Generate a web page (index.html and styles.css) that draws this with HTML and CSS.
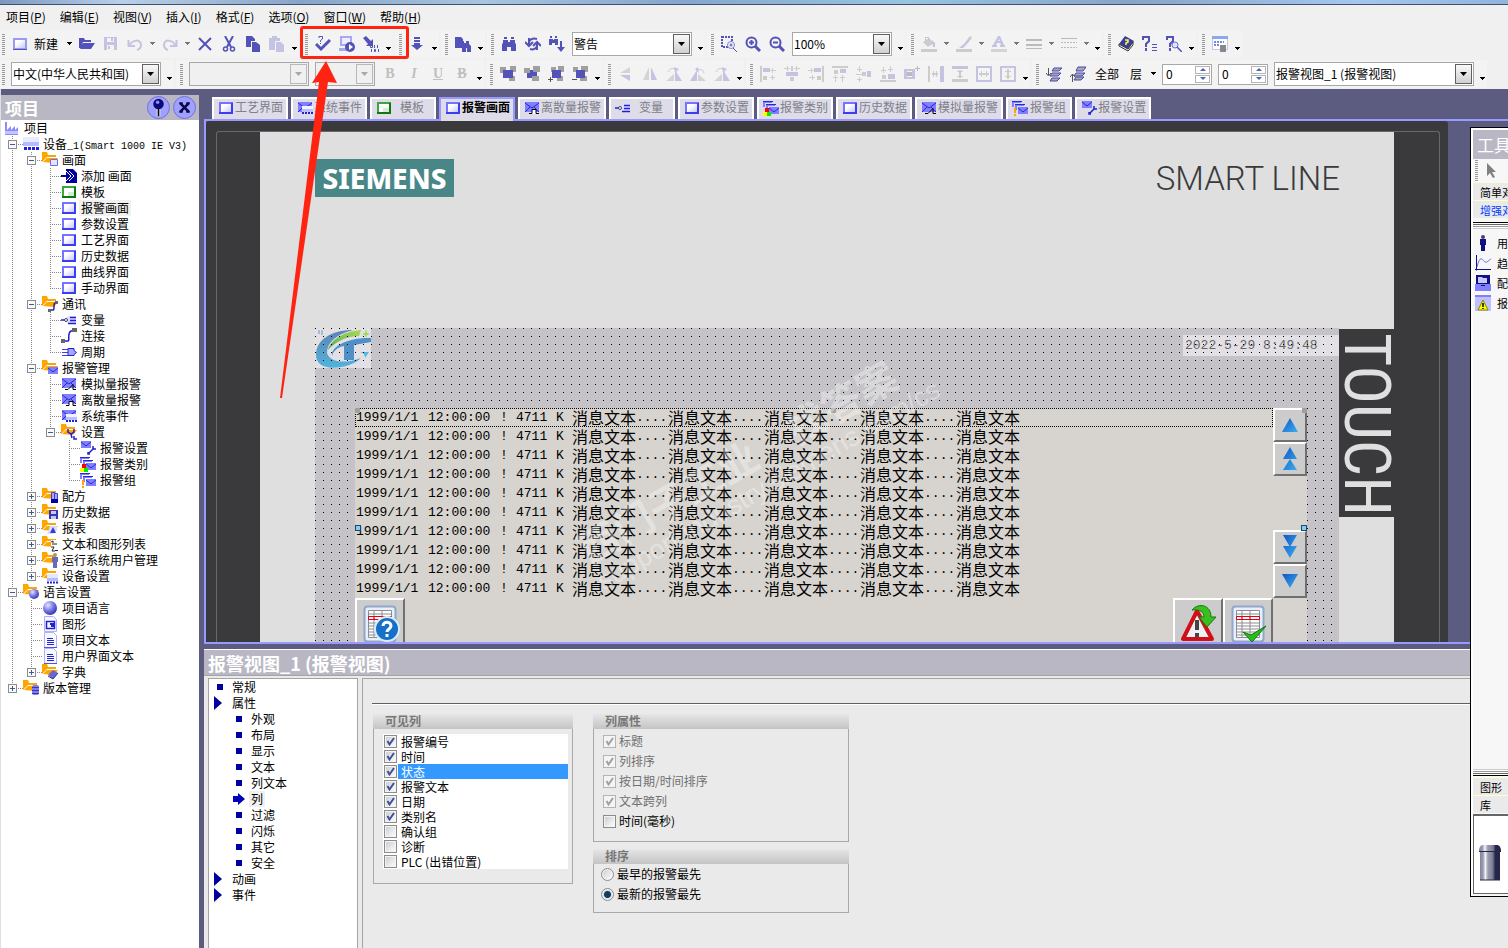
FILE: index.html
```
<!DOCTYPE html>
<html lang="zh-CN">

<head>
    <meta charset="utf-8">
    <title>报警画面</title>
    <link rel="stylesheet" href="styles.css">
</head>

<body>
    <!-- 图标 -->
    <svg class="sprite" aria-hidden="true">
        <defs>
            <linearGradient id="g-screen" x1="1" y1="1" x2="0" y2="0"><stop offset="0" stop-color="#c4c8ff"/><stop offset=".7" stop-color="#fff"/></linearGradient>
            <linearGradient id="g-arrow" x1="0" y1="0" x2="1" y2="1"><stop offset="0" stop-color="#1454c4"/><stop offset="1" stop-color="#38b0f0"/></linearGradient>
            <radialGradient id="g-ball" cx=".35" cy=".3" r=".8"><stop offset="0" stop-color="#e4e4ff"/><stop offset=".5" stop-color="#7878e8"/><stop offset="1" stop-color="#2828a0"/></radialGradient>
            <linearGradient id="g-logo" x1="0" y1="0" x2="0" y2="1"><stop offset="0" stop-color="#5f84b4"/><stop offset="1" stop-color="#50b4dc"/></linearGradient>
            <linearGradient id="g-leaf" x1="0" y1="1" x2="1" y2="0"><stop offset="0" stop-color="#58a868"/><stop offset="1" stop-color="#a8dc50"/></linearGradient>
            <linearGradient id="g-tank"><stop offset="0" stop-color="#85859a"/><stop offset=".15" stop-color="#9a9ab0"/><stop offset=".27" stop-color="#f4f4fa"/><stop offset=".4" stop-color="#9a9ab0"/><stop offset=".6" stop-color="#85859a"/><stop offset=".7" stop-color="#55557a"/><stop offset=".75" stop-color="#26264a"/></linearGradient>
        </defs>
        <symbol id="i-screen" viewBox="0 0 16 16"><path fill="#7474ff" d="M1 2h14v12H1z"/><path fill="#3c3cf0" d="M1 12h14v2H1zM13 3h2v11h-2z"/><path fill="url(#g-screen)" d="M3 4h10v8H3z"/></symbol>
        <symbol id="i-new" viewBox="0 0 16 16"><path fill="#9a9af0" d="M1 2h14v12H1z"/><path fill="url(#g-screen)" d="M3 4h10v8H3z"/><path fill="#5252b8" d="M1 13h14v1H1z"/></symbol>
        <symbol id="i-green" viewBox="0 0 16 16"><path fill="#38a838" d="M1 2h14v12H1z"/><path fill="#107810" d="M1 12h14v2H1zM13 3h2v11h-2z"/><path fill="#fff" d="M3 4h10v8H3z"/><path fill="#d4ecd4" d="M7 8h6v4H7z"/></symbol>
        <symbol id="i-mail" viewBox="0 0 16 16"><path fill="#8080ff" d="M1 2h14v10H1z"/><path d="M1 3l7 5 7-5M1 12l5-5M15 12l-5-5" fill="none" stroke="#2828d8"/></symbol>
        <symbol id="i-analog" viewBox="0 0 16 16"><use href="#i-mail"/><path d="M4 13.500h3l5-5v5h3" fill="none" stroke="#000"/></symbol>
        <symbol id="i-discrete" viewBox="0 0 16 16"><use href="#i-mail"/><path fill="#fff" d="M8 10h4v4H8z"/><path d="M5 13.500h3v-4h4v4h3" fill="none" stroke="#000"/></symbol>
        <symbol id="i-event" viewBox="0 0 16 16"><use href="#i-mail"/><path fill="#f0f2ff" d="M5 6h11v6H5z"/><path fill="#b8c0ff" d="M5 9h11v3H5z"/><path d="M5 13h11" stroke="#2020e0" stroke-width="2" stroke-dasharray="2 1"/></symbol>
        <symbol id="i-mailset" viewBox="0 0 16 16"><path fill="#8080ff" d="M1 1h10v7H1z"/><path d="M1 2l5 4 5-4" fill="none" stroke="#2828d8"/><path d="M9 13l5-5M8 12v2h2M13 6v3h3" fill="none" stroke="#2020d0" stroke-width="1.500"/></symbol>
        <symbol id="i-mails" viewBox="0 0 16 16"><path fill="#8080ff" d="M0 1h9v2H2v4H0zM3 4h9v2H5v4H3zM6 7h10v7H6z"/><path d="M0 1.500h10M3 4.500h10M6 8l5 4 5-4" fill="none" stroke="#2828d8"/></symbol>
        <symbol id="i-class" viewBox="0 0 16 16"><use href="#i-mails"/><path fill="#f00" d="M2 8h4v4H2z"/><path fill="#ff0" d="M0 12h4v4H0z"/><path fill="#0e0" d="M4 12h4v4H4z"/></symbol>
        <symbol id="i-group" viewBox="0 0 16 16"><use href="#i-mails"/><path fill="#ffa500" d="M2 8h2v5H2zM2 14h2v2H2z"/></symbol>
        <symbol id="i-tag" viewBox="0 0 16 16"><path fill="#dcdcff" d="M3 8l4-4h8v8H7z"/><path d="M0 8h4M9 5.500h6M9 8.500h6M7 11.500h8" stroke="#2020d8" stroke-width="1.500"/><circle cx="5" cy="8" r="1.500" fill="#fff" stroke="#446"/></symbol>
        <symbol id="i-link" viewBox="0 0 16 16"><path d="M3 13h4c2 0-1-8 3-10h3" fill="none" stroke="#2020c8" stroke-width="1.500"/><path fill="#666" d="M0 11h4v4H0zM11 0h5v4h-5z"/></symbol>
        <symbol id="i-cycle" viewBox="0 0 16 16"><path d="M1 5.500h9M1 8.500h9M1 11.500h9" stroke="#3c3cf0"/><path fill="#a8a8f8" stroke="#2020d8" d="M7 4.500h6v2l2.500 2-2.500 2v1H7z"/></symbol>
        <symbol id="i-add" viewBox="0 0 16 16"><path fill="#00009c" d="M5 1h7l4 4v10H5z"/><path d="M5 3l5 5-5 5M8 3l5 5-5 5" fill="none" stroke="#fff"/><path d="M0 8h8" stroke="#00009c" stroke-width="2"/></symbol>
        <symbol id="i-factory" viewBox="0 0 16 16"><path fill="#8c8cf8" d="M1 2h2v8l4-4v4l4-4v4l3-3v8H1z"/><path fill="#c4c4ff" d="M1 11h13v3H1z"/></symbol>
        <symbol id="i-device" viewBox="0 0 16 16"><path fill="#e8ecff" d="M0 1h16v8H0z"/><path fill="#b4bcff" d="M0 6h16v4H0z"/><path d="M1 12.500h15" stroke="#2020d8" stroke-width="3" stroke-dasharray="3 1"/></symbol>
        <symbol id="i-folder" viewBox="0 0 16 16"><path fill="#ffa500" d="M0 0h5l1 3h8v2H5L0 10zM1 10l4-4h11l-4 5z"/></symbol>
        <symbol id="i-f-screen" viewBox="0 0 16 16"><use href="#i-folder"/><path fill="#e4e4ff" stroke="#6c6cf8" d="M8.500 7.500h7v6h-7z"/></symbol>
        <symbol id="i-f-link" viewBox="0 0 16 16"><use href="#i-folder"/><path d="M8 14h3c2 0 0-6 2-7h2" fill="none" stroke="#2020c8" stroke-width="1.500"/><path fill="#666" d="M6 13h3v3H6zM13 5h3v3h-3z"/></symbol>
        <symbol id="i-f-mail" viewBox="0 0 16 16"><use href="#i-folder"/><path fill="#8080ff" d="M6 7h10v7H6z"/><path d="M6 8l5 4 5-4" fill="none" stroke="#2828d8"/></symbol>
        <symbol id="i-f-set" viewBox="0 0 16 16"><use href="#i-folder"/><path d="M7 5v3l3 2 1 4M13 5v3l-3 2M13 12v3h3" fill="none" stroke="#2020d0" stroke-width="1.500"/></symbol>
        <symbol id="i-f-recipe" viewBox="0 0 16 16"><use href="#i-folder"/><path fill="#a0a8ff" stroke="#4040d0" d="M9.500 4.500h3v9h-3zM12.500 5.500h3v9h-3z"/><path fill="#0000a0" d="M9 11h7v4H9z"/></symbol>
        <symbol id="i-f-disk" viewBox="0 0 16 16"><use href="#i-folder"/><path fill="#3838b0" d="M7 6h9v9H7z"/><path fill="#c8c8ff" d="M9 7h5v3H9zM9 12h5v3H9z"/></symbol>
        <symbol id="i-f-report" viewBox="0 0 16 16"><use href="#i-folder"/><path fill="#d8dcff" d="M8 6h7v4l-4 4H5z"/><path fill="#3838e0" d="M11 7l3 6H8z"/></symbol>
        <symbol id="i-f-list" viewBox="0 0 16 16"><use href="#i-folder"/><path fill="#fff" d="M9 4h7v12H9z"/><path d="M9 6l2-1v4M15 8h-3M9 11h3l-2 4h3M13 14.500h3" fill="none" stroke="#223"/></symbol>
        <symbol id="i-f-user" viewBox="0 0 16 16"><use href="#i-folder"/><circle cx="13" cy="3" r="2" fill="#b89060"/><path fill="#6868c0" d="M10 5h6v5h-1v6h-4v-6h-1z"/></symbol>
        <symbol id="i-f-device" viewBox="0 0 16 16"><use href="#i-folder"/><path fill="#e4e8ff" d="M5 6h11v7H5z"/><path fill="#b4bcff" d="M5 10h11v3H5z"/><path d="M5 14.500h11" stroke="#2020d8" stroke-width="2" stroke-dasharray="2 1"/></symbol>
        <symbol id="i-f-ball" viewBox="0 0 16 16"><use href="#i-folder"/><circle cx="11" cy="10" r="5" fill="url(#g-ball)"/></symbol>
        <symbol id="i-f-book" viewBox="0 0 16 16"><use href="#i-folder"/><path fill="#6868d0" d="M6 11l5-5 5 3-5 6z"/><path d="M6 12l5 3 5-6" fill="none" stroke="#33337c"/></symbol>
        <symbol id="i-f-db" viewBox="0 0 16 16"><use href="#i-folder"/><rect x="9" y="5" width="7" height="10" rx="2" fill="#7c7cf0"/><path d="M9 7.500h7M9 10.500h7M9 13.500h7" stroke="#3838b0"/></symbol>
        <symbol id="i-ball" viewBox="0 0 16 16"><circle cx="8" cy="8" r="7" fill="url(#g-ball)"/></symbol>
        <symbol id="i-doc" viewBox="0 0 16 16"><path fill="#f8f8ff" stroke="#b0b0f0" d="M2.500.5h9l3 3v12h-12z"/><path d="M5 6.500h6M5 8.500h7M5 10.500h7M5 12.500h7" stroke="#2020d8"/><path d="M2 15.500h13" stroke="#5050f0"/></symbol>
        <symbol id="i-pic" viewBox="0 0 16 16"><path fill="#f8f8ff" stroke="#b0b0f0" d="M2.500.5h9l3 3v12h-12z"/><path d="M4.500 5.500h8v7h-8z" fill="none" stroke="#2020d8" stroke-width="1.500"/><path fill="#2020d8" d="M8 7h4v4H9V9H8z"/></symbol>

        <symbol id="t-open" viewBox="0 0 16 16"><path d="M0 2h5l1 2h6v2H4l-2 6-2 0zM4 7h12l-4 6H1z"/></symbol>
        <symbol id="t-save" viewBox="0 0 16 16"><path d="M1 1h13v13H1zM4 2v4h7V2zM4 9v5h7V9z" fill-rule="evenodd"/><path d="M5 10h2v3H5zM8 2h2v3H8z"/></symbol>
        <symbol id="t-undo" viewBox="0 0 16 16"><path d="M1.500 4v6H8M2 10C6 3 14 3 14 9c0 2-1 4-4 5" fill="none" stroke="currentColor" stroke-width="2"/></symbol>
        <symbol id="t-redo" viewBox="0 0 16 16"><path d="M14.500 4v6H8M14 10C10 3 2 3 2 9c0 2 1 4 4 5" fill="none" stroke="currentColor" stroke-width="2"/></symbol>
        <symbol id="t-del" viewBox="0 0 16 16"><path d="M2 2l12 12M14 2L2 14" fill="none" stroke="currentColor" stroke-width="2"/></symbol>
        <symbol id="t-cut" viewBox="0 0 16 16"><path d="M4 0l6 11M12 0L6 11" fill="none" stroke="currentColor" stroke-width="2"/><circle cx="4.500" cy="13" r="2" fill="none" stroke="currentColor" stroke-width="1.500"/><circle cx="11.500" cy="13" r="2" fill="none" stroke="currentColor" stroke-width="1.500"/></symbol>
        <symbol id="t-copy" viewBox="0 0 16 16"><path d="M1 0h6l3 3v2H6v6H1zM7 6h4l4 3v7H7z"/></symbol>
        <symbol id="t-paste" viewBox="0 0 16 16"><path d="M0 2h3V0h5v2h3v3H6v9H0zM7 6h5l3 3v7H7z"/></symbol>
        <symbol id="t-check" viewBox="0 0 16 16"><path d="M1 8l5 5 9-9" fill="none" stroke="currentColor" stroke-width="3"/><path d="M4 2V.5h3.500V3L5.500 4.500V6M5.500 7v1" fill="none" stroke="currentColor"/></symbol>
        <symbol id="t-run" viewBox="0 0 16 16"><path fill="#a8a8f0" d="M1 0h12v10H1zM0 12h9v3H0z"/><path fill="#eef" d="M3 2h8v6H3z"/><circle cx="11" cy="11" r="5"/><path fill="#fff" d="M10 8l4 3-4 3z"/></symbol>
        <symbol id="t-transfer" viewBox="0 0 16 16"><path d="M0 2l3-2 5 5 2-2v7H3l2-2z"/><path fill="none" stroke="currentColor" d="M7.500 9.500h2v2h-2zM11.500 9v3M14.500 9v3M8.500 13v3M11.500 13.500h1v2h-1zM15.500 13v3"/></symbol>
        <symbol id="t-down" viewBox="0 0 16 16"><path d="M5 1h6v2H5zM5 4h6v2H5zM5 7h6v2h3l-6 5-6-5h3z"/></symbol>
        <symbol id="t-cross" viewBox="0 0 16 16"><path d="M0 1h6l2 2v9H0zM6 5h3v2h2V5h3v3l2 2v6h-4v-4h-1v4H7V9z"/></symbol>
        <symbol id="t-find" viewBox="0 0 16 16"><path d="M3 1h3v2H3zM10 1h3v2h-3zM2 4h5v2h2V4h5v3l1 1v7h-5v-4H6v4H1V8l1-1z"/></symbol>
        <symbol id="t-replace" viewBox="0 0 16 16"><path d="M4 2v7M0 6l4 4 4-4M4 7c0-4 4-5 8-4M12 14V7M8 10l4-4 4 4M12 9c0 4-4 5-7 4" fill="none" stroke="currentColor" stroke-width="2"/></symbol>
        <symbol id="t-findnext" viewBox="0 0 16 16"><path d="M1 0h2v2H1zM6 0h2v2H6zM0 3h4v1h1V3h4v6H6V7H3v2H0zM11 5h2v6h3l-4 5-4-5h3z"/></symbol>
        <symbol id="t-zoomarea" viewBox="0 0 16 16"><path d="M1 1h10v10H1z" fill="none" stroke="currentColor" stroke-width="2" stroke-dasharray="2 1"/><circle cx="10" cy="9" r="3.500" fill="#f3f3f3" stroke="#8080d8"/><path d="M12 12l4 4M8.500 9h3M10 7.500v3" stroke="currentColor"/></symbol>
        <symbol id="t-zoomin" viewBox="0 0 16 16"><circle cx="6.500" cy="6.500" r="5" fill="none" stroke="currentColor" stroke-width="2"/><path d="M10 10l5 5" stroke="currentColor" stroke-width="3"/><path d="M4 6.500h5M6.500 4v5" stroke="currentColor" stroke-width="2"/></symbol>
        <symbol id="t-zoomout" viewBox="0 0 16 16"><circle cx="6.500" cy="6.500" r="5" fill="none" stroke="currentColor" stroke-width="2"/><path d="M10 10l5 5" stroke="currentColor" stroke-width="3"/><path d="M4 6.500h5" stroke="currentColor" stroke-width="2"/></symbol>
        <symbol id="t-fill" viewBox="0 0 16 16"><path fill="#ccc" d="M2 6l6-4 5 5-6 4zM0 13h16v3H0z"/><path d="M4 5V1h4v3H7V2H5v3zM11 4l3 3v4h-2z"/></symbol>
        <symbol id="t-brush" viewBox="0 0 16 16"><path fill="#ccc" d="M0 13h16v3H0z"/><path d="M14 0l2 2-6 7-3 3H3l5-4z"/><path fill="#e8e4b0" d="M13 0h3v3z"/></symbol>
        <symbol id="t-color" viewBox="0 0 16 16"><path fill="#d4d4d4" d="M0 13h16v3H0z"/><path d="M7 0h2l4 9h1v2h-5V9h1l-1-2H6L5 9h1v2H1V9h1zM8 3L7 5h2z" fill-rule="evenodd"/></symbol>
        <symbol id="t-lines" viewBox="0 0 16 16"><path fill="#bbb" d="M0 3h16v2H0zM0 8h16v2H0zM0 12h16v1H0z"/></symbol>
        <symbol id="t-dashes" viewBox="0 0 16 16"><path d="M0 2.500h16" stroke="#bbb"/><path d="M0 6.500h16M0 11.500h16" stroke="#bbb" stroke-dasharray="2 1"/></symbol>
        <symbol id="t-book" viewBox="0 0 16 16"><path fill="#3c3c9c" d="M7 0l9 5-6 8-9-5z"/><path fill="#eee" stroke="#333" d="M1 8l9 5 5-7v3l-5 6-9-5z"/><path d="M7 4h3v2L8 7v2" fill="none" stroke="#ff4" stroke-width="1.500"/></symbol>
        <symbol id="t-help" viewBox="0 0 16 16"><path d="M1 4V1h6v4L4 8v3M4 12v3" fill="none" stroke="currentColor" stroke-width="2"/><path d="M10 8.500h5M10 11.500h5M10 14.500h5" stroke="currentColor"/></symbol>
        <symbol id="t-helpfind" viewBox="0 0 16 16"><path d="M1 4V1h6v4L4 8v3M4 12v3" fill="none" stroke="currentColor" stroke-width="2"/><circle cx="9" cy="9" r="3" fill="#e0e4ff" stroke="#7070d0"/><path d="M11 11l5 5" stroke="currentColor" stroke-width="1.500"/></symbol>
        <symbol id="t-window" viewBox="0 0 16 16"><path fill="#c0c8ec" d="M0 0h16v14H0z"/><path fill="#88a8f0" d="M0 0h16v3H0z"/><path fill="#fff" d="M1 3h14v10H1z"/><path d="M2 6h10M2 9h6" stroke="#8080e8" stroke-width="2" stroke-dasharray="2 1"/><path fill="#888" d="M8 9h6v7H8z"/></symbol>

        <symbol id="t-front" viewBox="0 0 16 16"><path fill="#a0a0a0" d="M0 1h6v6H0zM10 0h6v6h-6zM9 10h6v5H9z"/><path d="M3 4h10v8H3z"/></symbol>
        <symbol id="t-back" viewBox="0 0 16 16"><path d="M3 4h10v8H3z"/><path fill="#a0a0a0" d="M0 2h6v5H0zM9 0h7v6H9zM8 10h7v5H8z"/></symbol>
        <symbol id="t-forward" viewBox="0 0 16 16"><path fill="#a0a0a0" d="M3 1h5v5H3zM10 0h6v6h-6zM9 10h6v5H9z"/><path d="M4 4h9v8H4z"/><path fill="#555" d="M0 13h5v1H0zM2 11h1v5H2z"/></symbol>
        <symbol id="t-backward" viewBox="0 0 16 16"><path fill="#a0a0a0" d="M1 1h5v5H1zM9 0h7v6H9zM8 10h7v5H8z"/><path d="M4 4h9v8H4z"/><path fill="#555" d="M0 13h5v1H0z"/></symbol>
        <symbol id="t-flipv" viewBox="0 0 16 16"><path fill="#d4d4d4" d="M12 1v6H2z"/><path d="M2 9h10v6z"/></symbol>
        <symbol id="t-fliph" viewBox="0 0 16 16"><path fill="#d4d4d4" d="M7 1v13H1z"/><path d="M9 1v13h6z"/></symbol>
        <symbol id="t-rotl" viewBox="0 0 16 16"><path fill="#d4d4d4" d="M8 8v7H0z"/><path d="M9 4l7 11H9zM8 1l5 2-4 4z"/><path d="M2 6c2-4 5-4 7-3" fill="none" stroke="currentColor"/></symbol>
        <symbol id="t-rotr" viewBox="0 0 16 16"><path fill="#d4d4d4" d="M8 8v7h8z"/><path d="M7 4L0 15h7zM8 1L5 3l4 4z"/><path d="M14 7c-1-4-4-4-7-3" fill="none" stroke="currentColor"/></symbol>
        <symbol id="t-al" viewBox="0 0 16 16"><path fill="#ccc" d="M0 0h2v16H0zM3 10h4v4H3zM12 2h1v5h-1zM10 4h6v1h-6zM10 11h5v1h-5zM12 9h1v5h-1z"/><path d="M3 2h7v4H3z"/></symbol>
        <symbol id="t-ac" viewBox="0 0 16 16"><path fill="#ccc" d="M0 2h6v1H0zM10 2h6v1h-6zM7 0h2v5H7zM3 0h1v5H3zM12 0h1v5h-1zM6 11h4v4H6z"/><path d="M2 6h12v4H2z"/></symbol>
        <symbol id="t-ar" viewBox="0 0 16 16"><path fill="#ccc" d="M14 0h2v16h-2zM9 10h4v4H9zM3 2h1v5H3zM0 4h6v1H0zM1 11h6v1H1zM4 9h1v5H4z"/><path d="M6 2h7v4H6z"/></symbol>
        <symbol id="t-at" viewBox="0 0 16 16"><path fill="#ccc" d="M0 0h16v2H0zM2 4h4v4H2zM3 9h1v7H3zM10 9h1v7h-1zM1 11h5v1H1zM8 11h5v1H8z"/><path d="M8 3h6v4H8z"/></symbol>
        <symbol id="t-am" viewBox="0 0 16 16"><path fill="#ccc" d="M3 0h1v6H3zM1 3h5v1H1zM0 8h6v1H0zM6 6h4v4H6zM3 11h1v5H3zM1 13h5v1H1z"/><path d="M11 5h4v6h-4z"/></symbol>
        <symbol id="t-ab" viewBox="0 0 16 16"><path fill="#ccc" d="M0 14h16v2H0zM2 9h4v4H2zM3 1h1v6H3zM10 0h1v6h-1zM1 4h5v1H1zM8 3h5v1H8z"/><path d="M8 8h7v5H8z"/></symbol>
        <symbol id="t-center" viewBox="0 0 16 16"><path d="M0 3h11v10H0zM3 5v6h5V5z" fill-rule="evenodd"/><path fill="#bbb" d="M3 6h5v4H3zM11 2h5v1h-5zM13 0h1v5h-1z"/></symbol>
        <symbol id="t-sw" viewBox="0 0 16 16"><path fill="#ccc" d="M0 0h2v16H0zM4 7h6v2H4zM5 5h1v6H5zM8 5h1v6H8z"/><path d="M12 0h4v16h-4z"/></symbol>
        <symbol id="t-sh" viewBox="0 0 16 16"><path fill="#ccc" d="M0 13h16v3H0zM7 4h2v8H7zM5 5h6v1H5zM5 10h6v1H5z"/><path d="M0 0h16v3H0z"/></symbol>
        <symbol id="t-ew" viewBox="0 0 16 16"><path d="M0 0h16v16H0zM2 2v12h12V2z" fill-rule="evenodd"/><path fill="#ccc" d="M3 7h10v2H3zM5 5h1v6H5zM10 5h1v6h-1z"/></symbol>
        <symbol id="t-eh" viewBox="0 0 16 16"><path d="M0 0h16v16H0zM2 2v12h12V2z" fill-rule="evenodd"/><path fill="#ccc" d="M7 3h2v10H7zM5 5h6v1H5zM5 10h6v1H5z"/></symbol>
        <symbol id="t-layer1" viewBox="0 0 16 16"><path d="M6 5l2-3h8l-3 3zM4 10l2-3h9l-3 3zM4 15l2-3h8l-3 3z" fill="#a8a8b8" stroke="#4848a8"/><path d="M2.500 2v7M0 7l2.500 3L5 7" fill="none" stroke="#555"/></symbol>
        <symbol id="t-layer2" viewBox="0 0 16 16"><path d="M6 5l2-4h8l-3 4zM4 10l2-3h9l-3 3zM4 14l2-3h8l-3 3z" fill="#a8a8b8" stroke="#4848a8"/><path d="M2.500 16V8M0 11l2.500-3L5 11" fill="none" stroke="#555"/></symbol>
        <symbol id="t-drop" viewBox="0 0 7 4"><path d="M1 0h5v1H1zM2 1h3v1H2zM3 2h1v1H3z"/></symbol>
        <symbol id="t-drop2" viewBox="0 0 7 4"><path d="M0 0h7L3.500 4z"/></symbol>

        <symbol id="a-table" viewBox="0 0 40 44"><rect x="1.500" y="1.500" width="31" height="35" rx="3" fill="#e8eefa" stroke="#90a8c8" stroke-width="2"/><path d="M5.500 5.500h23v27h-23zM5 9h24M5 18h24M5 21h24M5 24h24M5 27h24M5 30h24M11 5v27M19 5v27" fill="#fff" stroke="#8c8c94"/><path d="M5.500 11.500h23v3h-23zM11 12v3M19 12v3" fill="none" stroke="#e00010"/></symbol>
    </svg>

    <div class="app">
        <div class="titlebar"></div>

        <nav class="menubar">
            <button>项目(<u>P</u>)</button>
            <button>编辑(<u>E</u>)</button>
            <button>视图(<u>V</u>)</button>
            <button>插入(<u>I</u>)</button>
            <button>格式(<u>F</u>)</button>
            <button>选项(<u>O</u>)</button>
            <button>窗口(<u>W</u>)</button>
            <button>帮助(<u>H</u>)</button>
        </nav>

        <div class="toolrow">
            <div class="toolbar first">
                <i class="grip"></i>
                <button class="tool" title="新建"><svg><use href="#i-new"/></svg></button>
                <button class="tool-text new">新建</button>
                <button class="drop"><svg><use href="#t-drop"/></svg></button>
                <button class="tool"><svg><use href="#t-open"/></svg></button>
                <button class="tool off"><svg><use href="#t-save"/></svg></button>
                <button class="tool off"><svg><use href="#t-undo"/></svg></button>
                <button class="drop dim"><svg><use href="#t-drop"/></svg></button>
                <button class="tool off"><svg><use href="#t-redo"/></svg></button>
                <button class="drop dim"><svg><use href="#t-drop"/></svg></button>
                <button class="tool"><svg><use href="#t-del"/></svg></button>
                <button class="tool"><svg><use href="#t-cut"/></svg></button>
                <button class="tool"><svg><use href="#t-copy"/></svg></button>
                <button class="tool off"><svg><use href="#t-paste"/></svg></button>
                <button class="more"><svg><use href="#t-drop"/></svg></button>
            </div>
            <div class="toolbar">
                <i class="grip"></i>
                <button class="tool"><svg><use href="#t-check"/></svg></button>
                <button class="tool"><svg><use href="#t-run"/></svg></button>
                <button class="tool"><svg><use href="#t-transfer"/></svg></button>
                <button class="more"><svg><use href="#t-drop"/></svg></button>
            </div>
            <div class="toolbar">
                <i class="grip"></i>
                <button class="tool"><svg><use href="#t-down"/></svg></button>
                <button class="more"><svg><use href="#t-drop"/></svg></button>
            </div>
            <div class="toolbar">
                <i class="grip"></i>
                <button class="tool"><svg><use href="#t-cross"/></svg></button>
                <button class="more"><svg><use href="#t-drop"/></svg></button>
            </div>
            <div class="toolbar">
                <i class="grip"></i>
                <button class="tool"><svg><use href="#t-find"/></svg></button>
                <button class="tool"><svg><use href="#t-replace"/></svg></button>
                <button class="tool"><svg><use href="#t-findnext"/></svg></button>
                <div class="combo w120"><select aria-label="查找"><option>警告</option></select><span><svg><use href="#t-drop2"/></svg></span></div>
                <button class="more"><svg><use href="#t-drop"/></svg></button>
            </div>
            <div class="toolbar">
                <i class="grip"></i>
                <button class="tool"><svg><use href="#t-zoomarea"/></svg></button>
                <button class="tool"><svg><use href="#t-zoomin"/></svg></button>
                <button class="tool"><svg><use href="#t-zoomout"/></svg></button>
                <div class="combo w100"><select aria-label="缩放"><option>100%</option></select><span><svg><use href="#t-drop2"/></svg></span></div>
                <button class="more"><svg><use href="#t-drop"/></svg></button>
            </div>
            <div class="toolbar">
                <i class="grip"></i>
                <button class="tool off"><svg><use href="#t-fill"/></svg></button>
                <button class="drop dim"><svg><use href="#t-drop"/></svg></button>
                <button class="tool off"><svg><use href="#t-brush"/></svg></button>
                <button class="drop dim"><svg><use href="#t-drop"/></svg></button>
                <button class="tool off"><svg><use href="#t-color"/></svg></button>
                <button class="drop dim"><svg><use href="#t-drop"/></svg></button>
                <button class="tool off"><svg><use href="#t-lines"/></svg></button>
                <button class="drop dim"><svg><use href="#t-drop"/></svg></button>
                <button class="tool off"><svg><use href="#t-dashes"/></svg></button>
                <button class="drop dim"><svg><use href="#t-drop"/></svg></button>
                <button class="more"><svg><use href="#t-drop"/></svg></button>
            </div>
            <div class="toolbar">
                <i class="grip"></i>
                <button class="tool"><svg><use href="#t-book"/></svg></button>
                <button class="tool"><svg><use href="#t-help"/></svg></button>
                <button class="tool"><svg><use href="#t-helpfind"/></svg></button>
                <button class="more"><svg><use href="#t-drop"/></svg></button>
            </div>
            <div class="toolbar">
                <i class="grip"></i>
                <button class="tool"><svg><use href="#t-window"/></svg></button>
                <button class="more"><svg><use href="#t-drop"/></svg></button>
            </div>
        </div>

        <div class="toolrow">
            <div class="toolbar first">
                <i class="grip"></i>
                <div class="combo w150"><select aria-label="语言"><option>中文(中华人民共和国)</option></select><span><svg><use href="#t-drop2"/></svg></span></div>
                <button class="more"><svg><use href="#t-drop"/></svg></button>
            </div>
            <div class="toolbar">
                <i class="grip"></i>
                <div class="combo w120 off"><select aria-label="字体" disabled></select><span><svg><use href="#t-drop2"/></svg></span></div>
                <div class="combo w60 off"><select aria-label="字号" disabled></select><span><svg><use href="#t-drop2"/></svg></span></div>
                <button class="tool letter"><b>B</b></button>
                <button class="tool letter"><i>I</i></button>
                <button class="tool letter"><u>U</u></button>
                <button class="tool letter"><s>B</s></button>
                <button class="more"><svg><use href="#t-drop"/></svg></button>
            </div>
            <div class="toolbar">
                <i class="grip"></i>
                <button class="tool"><svg><use href="#t-front"/></svg></button>
                <button class="tool"><svg><use href="#t-back"/></svg></button>
                <button class="tool"><svg><use href="#t-forward"/></svg></button>
                <button class="tool"><svg><use href="#t-backward"/></svg></button>
                <button class="more"><svg><use href="#t-drop"/></svg></button>
            </div>
            <div class="toolbar">
                <i class="grip"></i>
                <button class="tool off"><svg><use href="#t-flipv"/></svg></button>
                <button class="tool off"><svg><use href="#t-fliph"/></svg></button>
                <button class="tool off"><svg><use href="#t-rotl"/></svg></button>
                <button class="tool off"><svg><use href="#t-rotr"/></svg></button>
                <button class="tool off"><svg><use href="#t-rotl"/></svg></button>
                <button class="more"><svg><use href="#t-drop"/></svg></button>
            </div>
            <div class="toolbar">
                <i class="grip"></i>
                <button class="tool off"><svg><use href="#t-al"/></svg></button>
                <button class="tool off"><svg><use href="#t-ac"/></svg></button>
                <button class="tool off"><svg><use href="#t-ar"/></svg></button>
                <button class="tool off"><svg><use href="#t-at"/></svg></button>
                <button class="tool off"><svg><use href="#t-am"/></svg></button>
                <button class="tool off"><svg><use href="#t-ab"/></svg></button>
                <button class="tool off"><svg><use href="#t-center"/></svg></button>
                <button class="tool off"><svg><use href="#t-sw"/></svg></button>
                <button class="tool off"><svg><use href="#t-sh"/></svg></button>
                <button class="tool off"><svg><use href="#t-ew"/></svg></button>
                <button class="tool off"><svg><use href="#t-eh"/></svg></button>
                <button class="more"><svg><use href="#t-drop"/></svg></button>
            </div>
            <div class="toolbar">
                <i class="grip"></i>
                <button class="tool"><svg><use href="#t-layer1"/></svg></button>
                <button class="tool"><svg><use href="#t-layer2"/></svg></button>
                <button class="tool-text">全部</button>
                <button class="tool-text layer">层</button>
                <button class="drop"><svg><use href="#t-drop"/></svg></button>
                <div class="spin"><input type="text" value="0" aria-label="X"><div><button class="up"></button><button class="down"></button></div></div>
                <div class="spin"><input type="text" value="0" aria-label="Y"><div><button class="up"></button><button class="down"></button></div></div>
                <div class="combo w200"><select aria-label="对象"><option>报警视图_1 (报警视图)</option></select><span><svg><use href="#t-drop2"/></svg></span></div>
                <button class="more"><svg><use href="#t-drop"/></svg></button>
            </div>
        </div>

        <div class="workspace">
            <!-- 项目树 -->
            <aside class="project">
                <header class="panel-title">
                    <h2>项目</h2>
                    <button class="round" title="固定"><svg viewBox="0 0 24 24"><path d="M12 10v12" stroke="#fff" stroke-width="4"/><path d="M12 10v12" stroke="#000" stroke-width="2"/><circle cx="12" cy="8" r="6" fill="#0a0a78"/><circle cx="11" cy="6" r="2" fill="#8c8cf0"/></svg></button>
                    <button class="round" title="关闭"><svg viewBox="0 0 24 24"><path d="M7 7l10 10M17 7L7 17" stroke="#0a0a50" stroke-width="3"/><path d="M6 7h4M14 7h4M6 17h4M14 17h4" stroke="#0a0a50" stroke-width="2"/></svg></button>
                </header>
                <div class="tree">
                    <div class="row root"><svg><use href="#i-factory"/></svg><span>项目</span></div>
                    <ul>
                        <li>
                            <div class="row"><button class="exp open"></button><svg><use href="#i-device"/></svg><span>设备<span class="ascii">_1(Smart 1000 IE V3)</span></span></div>
                            <ul>
                                <li>
                                    <div class="row"><button class="exp open"></button><svg><use href="#i-f-screen"/></svg><span>画面</span></div>
                                    <ul>
                                        <li><div class="row"><svg><use href="#i-add"/></svg><span>添加 画面</span></div></li>
                                        <li><div class="row"><svg><use href="#i-green"/></svg><span>模板</span></div></li>
                                        <li><div class="row current"><svg><use href="#i-screen"/></svg><span>报警画面</span></div></li>
                                        <li><div class="row"><svg><use href="#i-screen"/></svg><span>参数设置</span></div></li>
                                        <li><div class="row"><svg><use href="#i-screen"/></svg><span>工艺界面</span></div></li>
                                        <li><div class="row"><svg><use href="#i-screen"/></svg><span>历史数据</span></div></li>
                                        <li><div class="row"><svg><use href="#i-screen"/></svg><span>曲线界面</span></div></li>
                                        <li><div class="row"><svg><use href="#i-screen"/></svg><span>手动界面</span></div></li>
                                    </ul>
                                </li>
                                <li>
                                    <div class="row"><button class="exp open"></button><svg><use href="#i-f-link"/></svg><span>通讯</span></div>
                                    <ul>
                                        <li><div class="row"><svg><use href="#i-tag"/></svg><span>变量</span></div></li>
                                        <li><div class="row"><svg><use href="#i-link"/></svg><span>连接</span></div></li>
                                        <li><div class="row"><svg><use href="#i-cycle"/></svg><span>周期</span></div></li>
                                    </ul>
                                </li>
                                <li>
                                    <div class="row"><button class="exp open"></button><svg><use href="#i-f-mail"/></svg><span>报警管理</span></div>
                                    <ul>
                                        <li><div class="row"><svg><use href="#i-analog"/></svg><span>模拟量报警</span></div></li>
                                        <li><div class="row"><svg><use href="#i-discrete"/></svg><span>离散量报警</span></div></li>
                                        <li><div class="row"><svg><use href="#i-event"/></svg><span>系统事件</span></div></li>
                                        <li>
                                            <div class="row"><button class="exp open"></button><svg><use href="#i-f-set"/></svg><span>设置</span></div>
                                            <ul>
                                                <li><div class="row"><svg><use href="#i-mailset"/></svg><span>报警设置</span></div></li>
                                                <li><div class="row"><svg><use href="#i-class"/></svg><span>报警类别</span></div></li>
                                                <li><div class="row"><svg><use href="#i-group"/></svg><span>报警组</span></div></li>
                                            </ul>
                                        </li>
                                    </ul>
                                </li>
                                <li><div class="row"><button class="exp"></button><svg><use href="#i-f-recipe"/></svg><span>配方</span></div></li>
                                <li><div class="row"><button class="exp"></button><svg><use href="#i-f-disk"/></svg><span>历史数据</span></div></li>
                                <li><div class="row"><button class="exp"></button><svg><use href="#i-f-report"/></svg><span>报表</span></div></li>
                                <li><div class="row"><button class="exp"></button><svg><use href="#i-f-list"/></svg><span>文本和图形列表</span></div></li>
                                <li><div class="row"><button class="exp"></button><svg><use href="#i-f-user"/></svg><span>运行系统用户管理</span></div></li>
                                <li><div class="row"><button class="exp"></button><svg><use href="#i-f-device"/></svg><span>设备设置</span></div></li>
                            </ul>
                        </li>
                        <li>
                            <div class="row"><button class="exp open"></button><svg><use href="#i-f-ball"/></svg><span>语言设置</span></div>
                            <ul>
                                <li><div class="row"><svg><use href="#i-ball"/></svg><span>项目语言</span></div></li>
                                <li><div class="row"><svg><use href="#i-pic"/></svg><span>图形</span></div></li>
                                <li><div class="row"><svg><use href="#i-doc"/></svg><span>项目文本</span></div></li>
                                <li><div class="row"><svg><use href="#i-doc"/></svg><span>用户界面文本</span></div></li>
                                <li><div class="row"><button class="exp"></button><svg><use href="#i-f-book"/></svg><span>字典</span></div></li>
                            </ul>
                        </li>
                        <li><div class="row"><button class="exp"></button><svg><use href="#i-f-db"/></svg><span>版本管理</span></div></li>
                    </ul>
                </div>
            </aside>

            <main class="main">
                <div class="tabs">
                    <button class="tab"><svg><use href="#i-screen"/></svg><span>工艺界面</span></button>
                    <button class="tab"><svg><use href="#i-event"/></svg><span>系统事件</span></button>
                    <button class="tab"><svg><use href="#i-green"/></svg><span>模板</span></button>
                    <button class="tab active"><svg><use href="#i-screen"/></svg><span>报警画面</span></button>
                    <button class="tab"><svg><use href="#i-discrete"/></svg><span>离散量报警</span></button>
                    <button class="tab"><svg><use href="#i-tag"/></svg><span>变量</span></button>
                    <button class="tab"><svg><use href="#i-screen"/></svg><span>参数设置</span></button>
                    <button class="tab"><svg><use href="#i-class"/></svg><span>报警类别</span></button>
                    <button class="tab"><svg><use href="#i-screen"/></svg><span>历史数据</span></button>
                    <button class="tab"><svg><use href="#i-analog"/></svg><span>模拟量报警</span></button>
                    <button class="tab"><svg><use href="#i-group"/></svg><span>报警组</span></button>
                    <button class="tab"><svg><use href="#i-mailset"/></svg><span>报警设置</span></button>
                </div>

                <section class="editor">
                    <div class="bezel">
                        <div class="bezel-line">
                            <div class="face">
                                <div class="brand">
                                    <div class="siemens">SIEMENS</div>
                                    <div class="smart">SMART LINE</div>
                                </div>
                                <div class="front">
                                    <div class="screen">
                                        <div class="screen-top">
                                            <svg class="logo" viewBox="0 0 56 40"><path d="M1 27C1 12 16 2 38 2 22 6 12 14 12 25c2 8 16 12 34 5-8 9-34 14-42 5-2-2-3-5-3-8z" fill="url(#g-logo)"/><path d="M13 22C16 10 32 3 46 2l-2 6C32 8 20 14 13 22z" fill="url(#g-leaf)"/><path d="M17 28c-2-10 18-19 39-18v4l-17 3v15H29V18c-6 1-11 5-12 10z" fill="#5090c8"/><path d="M45 24h9l-4 6c0-3-1-5-5-6z" fill="#58b8e0"/><path d="M51 1l1 4 3 1-3 1-1 3-1-3-3-1 3-1z" fill="#a0d850"/><path d="M4 2v4M7 2v5" stroke="#60a0c0"/></svg>
                                            <div class="clock">2022-5-29 8:49:48</div>
                                        </div>
                                        <div class="alarm">
                                            <table>
                                                <tr class="focus"><td>1999/1/1</td><td>12:00:00</td><td>!</td><td>4711</td><td>K</td><td>消息文本<i>....</i>消息文本<i>....</i>消息文本<i>....</i>消息文本<i>....</i>消息文本</td></tr>
                                                <tr><td>1999/1/1</td><td>12:00:00</td><td>!</td><td>4711</td><td>K</td><td>消息文本<i>....</i>消息文本<i>....</i>消息文本<i>....</i>消息文本<i>....</i>消息文本</td></tr>
                                                <tr><td>1999/1/1</td><td>12:00:00</td><td>!</td><td>4711</td><td>K</td><td>消息文本<i>....</i>消息文本<i>....</i>消息文本<i>....</i>消息文本<i>....</i>消息文本</td></tr>
                                                <tr><td>1999/1/1</td><td>12:00:00</td><td>!</td><td>4711</td><td>K</td><td>消息文本<i>....</i>消息文本<i>....</i>消息文本<i>....</i>消息文本<i>....</i>消息文本</td></tr>
                                                <tr><td>1999/1/1</td><td>12:00:00</td><td>!</td><td>4711</td><td>K</td><td>消息文本<i>....</i>消息文本<i>....</i>消息文本<i>....</i>消息文本<i>....</i>消息文本</td></tr>
                                                <tr><td>1999/1/1</td><td>12:00:00</td><td>!</td><td>4711</td><td>K</td><td>消息文本<i>....</i>消息文本<i>....</i>消息文本<i>....</i>消息文本<i>....</i>消息文本</td></tr>
                                                <tr><td>1999/1/1</td><td>12:00:00</td><td>!</td><td>4711</td><td>K</td><td>消息文本<i>....</i>消息文本<i>....</i>消息文本<i>....</i>消息文本<i>....</i>消息文本</td></tr>
                                                <tr><td>1999/1/1</td><td>12:00:00</td><td>!</td><td>4711</td><td>K</td><td>消息文本<i>....</i>消息文本<i>....</i>消息文本<i>....</i>消息文本<i>....</i>消息文本</td></tr>
                                                <tr><td>1999/1/1</td><td>12:00:00</td><td>!</td><td>4711</td><td>K</td><td>消息文本<i>....</i>消息文本<i>....</i>消息文本<i>....</i>消息文本<i>....</i>消息文本</td></tr>
                                                <tr><td>1999/1/1</td><td>12:00:00</td><td>!</td><td>4711</td><td>K</td><td>消息文本<i>....</i>消息文本<i>....</i>消息文本<i>....</i>消息文本<i>....</i>消息文本</td></tr>
                                            </table>
                                            <div class="scroll">
                                                <button class="key"><svg viewBox="0 0 16 28"><path fill="url(#g-arrow)" d="M8 7l8 14H0z"/></svg></button>
                                                <button class="key"><svg viewBox="0 0 16 28"><path fill="url(#g-arrow)" d="M8 2l7 12H1zM8 14l7 11H1z"/></svg></button>
                                                <button class="key push"><svg viewBox="0 0 16 28"><path fill="url(#g-arrow)" d="M8 14l7-12H1zM8 25l7-12H1z"/></svg></button>
                                                <button class="key"><svg viewBox="0 0 16 28"><path fill="url(#g-arrow)" d="M8 21l8-14H0z"/></svg></button>
                                            </div>
                                            <div class="alarm-keys">
                                                <button class="key big"><svg viewBox="-3 -4 40 44"><use href="#a-table" width="40" height="44"/><circle cx="24" cy="24" r="12" fill="#1470c8" stroke="#d8ecfc" stroke-width="2"/><path d="M20 21c0-5 8-5 8 0 0 3-4 3-4 6M24 29v3" fill="none" stroke="#fff" stroke-width="3"/></svg></button>
                                                <button class="key big push"><svg viewBox="-3 -4 40 44"><path d="M16 6L2 34h29z" fill="#f0f0f4" stroke="#d01018" stroke-width="4" stroke-linejoin="round"/><path d="M16 15v10M16 28v4" stroke="#444" stroke-width="4"/><path d="M11 5C18-3 30 0 30 12h5l-9 10-8-10h5c0-5-4-8-12-7z" fill="#38c020" stroke="#187808"/></svg></button>
                                                <button class="key big"><svg viewBox="-3 -4 40 44"><use href="#a-table" width="40" height="44"/><path d="M12 27l8 3 15-9-14 16z" fill="#28c018" stroke="#0c7808"/></svg></button>
                                            </div>
                                            <i class="handle h1"></i><i class="handle h2"></i><i class="handle h3"></i>
                                            <i class="handle blue h4"></i><i class="handle blue h5"></i>
                                        </div>
                                    </div>
                                    <div class="touch">TOUCH</div>
                                </div>
                            </div>
                        </div>
                    </div>
                    <div class="watermark">
                        <p class="cn">西门子工业&emsp;找答案</p>
                        <p>support.industry.siemens.com/cs</p>
                    </div>
                </section>

                <section class="props">
                    <header class="panel-title"><h2>报警视图_1 (报警视图)</h2></header>
                    <div class="props-body">
                        <ul class="props-nav">
                            <li><i class="sq"></i>常规</li>
                            <li><i class="tri"></i>属性</li>
                            <li class="sub"><i class="sq"></i>外观</li>
                            <li class="sub"><i class="sq"></i>布局</li>
                            <li class="sub"><i class="sq"></i>显示</li>
                            <li class="sub"><i class="sq"></i>文本</li>
                            <li class="sub"><i class="sq"></i>列文本</li>
                            <li class="sub current"><svg viewBox="0 0 12 12"><path d="M0 3h5V0l7 6-7 6V9H0z" fill="#0000b8"/></svg><span>列</span></li>
                            <li class="sub"><i class="sq"></i>过滤</li>
                            <li class="sub"><i class="sq"></i>闪烁</li>
                            <li class="sub"><i class="sq"></i>其它</li>
                            <li class="sub"><i class="sq"></i>安全</li>
                            <li><i class="tri"></i>动画</li>
                            <li><i class="tri"></i>事件</li>
                        </ul>
                        <div class="props-page">
                            <div class="rule"></div>
                            <div class="groups">
                                <div class="group columns">
                                    <h3>可见列</h3>
                                    <div class="list">
                                        <label><input type="checkbox" checked><span>报警编号</span></label>
                                        <label><input type="checkbox" checked><span>时间</span></label>
                                        <label class="sel"><input type="checkbox" checked><span>状态</span></label>
                                        <label><input type="checkbox" checked><span>报警文本</span></label>
                                        <label><input type="checkbox" checked><span>日期</span></label>
                                        <label><input type="checkbox" checked><span>类别名</span></label>
                                        <label><input type="checkbox"><span>确认组</span></label>
                                        <label><input type="checkbox"><span>诊断</span></label>
                                        <label><input type="checkbox"><span>PLC (出错位置)</span></label>
                                    </div>
                                </div>
                                <div class="group-col">
                                    <div class="group">
                                        <h3>列属性</h3>
                                        <div class="options">
                                            <label><input type="checkbox" checked disabled><span>标题</span></label>
                                            <label><input type="checkbox" checked disabled><span>列排序</span></label>
                                            <label><input type="checkbox" checked disabled><span>按日期/时间排序</span></label>
                                            <label><input type="checkbox" checked disabled><span>文本跨列</span></label>
                                            <label><input type="checkbox"><span>时间(毫秒)</span></label>
                                        </div>
                                    </div>
                                    <div class="group">
                                        <h3>排序</h3>
                                        <div class="options radios">
                                            <label><input type="radio" name="sort"><span>最早的报警最先</span></label>
                                            <label><input type="radio" name="sort" checked><span>最新的报警最先</span></label>
                                        </div>
                                    </div>
                                </div>
                            </div>
                        </div>
                    </div>
                </section>
            </main>
        </div>

        <!-- 浮动工具窗口 -->
        <aside class="toolbox">
            <h2>工具</h2>
            <div class="toolbox-bar"><i class="grip"></i><svg viewBox="0 0 12 16"><path d="M2 0l9 9H7l3 5-2 1-3-5-3 3z" fill="#808080"/></svg></div>
            <button class="cat">简单对</button>
            <button class="cat blue">增强对</button>
            <div class="seam"></div>
            <ul>
                <li><svg viewBox="0 0 16 16"><circle cx="8" cy="2" r="2" fill="#446"/><path fill="#101080" d="M5 4h6v6h-1v6H6v-6H5z"/></svg>用</li>
                <li><svg viewBox="0 0 16 16"><path d="M1.500 0v15.500M0 14.500h16" stroke="#101080"/><path d="M2 12C5 0 7 4 10 7c2 1 4-2 6-3" fill="none" stroke="#6868e8"/></svg>趋</li>
                <li><svg viewBox="0 0 16 16"><path fill="#101080" d="M1 0h14v10H1z"/><path fill="#c4c8ff" d="M3 2h4l1 1h4v5H3z"/><path fill="#8080ff" d="M0 9h16v7H0z"/><path d="M6 10.500h4" stroke="#101080"/></svg>配</li>
                <li><svg viewBox="0 0 16 16"><path fill="#c0c0ff" d="M0 0h16v16H0z"/><path fill="#8080ff" d="M0 0h16v2H0z"/><path d="M8 5l5 10H3z" fill="#ff0" stroke="#880"/><path d="M8 8v4M8 13v1" stroke="#000" stroke-width="1.500"/></svg>报</li>
            </ul>
            <div class="seam flip"></div>
            <button class="cat">图形</button>
            <button class="cat">库</button>
            <div class="lib"><svg viewBox="0 0 22 36"><path d="M1 6h20v29H1z" fill="url(#g-tank)"/><path d="M0 6c0-4 2-6 4-6h14c2 0 4 2 4 6z" fill="url(#g-tank)"/><path d="M0 6.500h22M1 35h20" stroke="#26264a"/></svg></div>
        </aside>

        <!-- 标注 -->
        <div class="mark-box"></div>
        <svg class="mark-arrow" viewBox="0 0 52 340"><path d="M46 0l11 22-9-1L2 337H0L39 21l-7 1z" fill="#ff2412"/></svg>
    </div>
</body>

</html>
```
FILE: styles.css
```
* {
    box-sizing: border-box;
}

body {
    margin: 0;
    font: 12px/16px "Noto Sans CJK SC", sans-serif;
    color: #000;
}

button {
    font: inherit;
    color: inherit;
    border: 0;
    padding: 0;
    margin: 0;
    background: none;
}

h2,
h3,
p,
ul {
    margin: 0;
    padding: 0;
    list-style: none;
}

svg {
    display: block;
    fill: currentColor;
    flex: none;
}

.sprite {
    position: absolute;
    width: 0;
    height: 0;
}

.app {
    position: relative;
    display: flex;
    flex-direction: column;
    height: 100vh;
    overflow: hidden;
    background: #f0f0f0;
}

.titlebar {
    height: 5px;
    flex: none;
    background: linear-gradient(90deg, #7c98c0, #b8d0e8 8%, #88a4c8 20%, #a8c4e0 32%, #86a6cc 45%, #98c4e0 60%, #88a4c8 75%, #a4c8ec 90%, #90b4dc);
    border-bottom: 1px solid #40506c;
}

.menubar {
    display: flex;
    gap: 14px;
    height: 24px;
    flex: none;
    align-items: center;
    padding: 0 6px;
}

/* 工具栏 */
.toolrow {
    display: flex;
    gap: 2px;
    height: 30px;
    flex: none;
    padding: 1px 0;
}

.toolbar {
    display: flex;
    align-items: center;
    height: 28px;
    background: #f3f3f3;
    flex: none;
}

.toolbar.first {
    margin-left: -2px;
}

.grip {
    width: 3px;
    height: 21px;
    margin: 0 3px 0 4px;
    flex: none;
    background: repeating-linear-gradient(#999 0 1px, transparent 1px 2px);
}

.tool {
    width: 24px;
    height: 24px;
    display: flex;
    align-items: center;
    justify-content: center;
    color: #5252b8;
}

.tool svg {
    width: 16px;
    height: 16px;
}

.tool.off {
    color: #c4c4e2;
}

.tool.letter {
    color: #c0c0c0;
    font: bold 14px "Liberation Serif", serif;
}

.tool-text {
    padding: 0 5px;
}

.tool-text.new {
    padding: 0 6px 0 2px;
}

.tool-text.layer {
    padding: 0 6px;
}

.drop {
    width: 11px;
    display: flex;
    justify-content: center;
}

.drop.dim {
    color: #777;
}

.drop svg,
.more svg,
.combo span svg {
    width: 7px;
    height: 4px;
}

.more {
    width: 10px;
    height: 18px;
    align-self: flex-end;
    display: flex;
    align-items: center;
    justify-content: center;
}

.combo {
    display: flex;
    height: 24px;
    margin: 0 3px;
    padding: 1px;
    border: 1px solid #a8a8a8;
    background: #fff;
    flex: none;
}

.combo select {
    appearance: none;
    flex: 1;
    min-width: 0;
    border: 0;
    padding: 0;
    background: transparent;
    font: inherit;
    color: #000;
}

.combo span {
    width: 17px;
    border: 1px solid #606060;
    background: linear-gradient(#f8f8f8, #d0d0d0);
    display: flex;
    align-items: center;
    justify-content: center;
    pointer-events: none;
}

.combo.off {
    background: #f0f0f0;
}

.combo.off span {
    border-color: #b8b8b8;
    background: #f0f0f0;
    color: #a8a8a8;
}

.w60 {
    width: 60px;
}

.w100 {
    width: 100px;
}

.w120 {
    width: 120px;
}

.w150 {
    width: 150px;
}

.w200 {
    width: 200px;
}

.spin {
    display: flex;
    width: 50px;
    height: 21px;
    margin: 0 3px;
    padding: 1px;
    border: 1px solid #a8a8a8;
    background: #fff;
}

.spin input {
    flex: 1;
    min-width: 0;
    border: 0;
    padding: 0 2px;
    font: inherit;
}

.spin div {
    display: flex;
    flex-direction: column;
    width: 15px;
    gap: 1px;
}

.spin button {
    flex: 1;
    border: 1px solid #b4b4b8;
    display: flex;
    align-items: center;
    justify-content: center;
}

.spin button::after {
    content: "";
    border: 3px solid transparent;
}

.spin .up::after {
    border-top: 0;
    border-bottom-color: #4a66b0;
}

.spin .down::after {
    border-bottom: 0;
    border-top-color: #4a66b0;
}

/* 工作区 */
.workspace {
    flex: 1;
    min-height: 0;
    display: flex;
    gap: 5px;
    background: #5c5b80;
}

.panel-title {
    display: flex;
    align-items: center;
    height: 25px;
    flex: none;
    background: #b8b7c3;
}

.panel-title h2 {
    flex: 1;
    padding-left: 4px;
    color: #fff;
    font-size: 18px;
    line-height: 24px;
}

.project {
    width: 199px;
    flex: none;
    display: flex;
    flex-direction: column;
    padding-top: 6px;
    border-left: 1px solid #e0e0e0;
}

.project h2 {
    font-size: 17px;
}

.round {
    width: 23px;
    height: 23px;
    margin-right: 3px;
    border: 1px solid #7070e0;
    border-radius: 50%;
    background: #a0a0ff;
}

.round svg {
    width: 21px;
    height: 21px;
}

.tree {
    flex: 1;
    background: #fff;
    padding-left: 2px;
    white-space: nowrap;
}

.row {
    display: flex;
    align-items: center;
    height: 16px;
    padding-left: 20px;
    background: repeating-linear-gradient(90deg, #888 0 1px, transparent 1px 2px) 9px 8px / 11px 1px no-repeat;
}

.row.root {
    padding-left: 1px;
    background: none;
}

.row svg {
    width: 16px;
    height: 16px;
    margin-right: 2px;
}

.row > span {
    padding: 0 2px;
}

.row.current > span {
    background: #f0f0f0;
}

.ascii {
    font: 10px "Liberation Mono", monospace;
}

.tree ul ul {
    padding-left: 19px;
}

.tree li {
    background: repeating-linear-gradient(#888 0 1px, transparent 1px 2px) 9px 0 / 1px 100% no-repeat;
}

.tree li:last-child {
    background-size: 1px 8px;
}

.exp {
    width: 9px;
    height: 9px;
    margin: 0 6px 0 -15px;
    border: 1px solid #8c8c8c;
    background: linear-gradient(#3c5c98, #3c5c98) center / 5px 1px no-repeat, linear-gradient(#3c5c98, #3c5c98) center / 1px 5px no-repeat, #fafafa;
}

.exp.open {
    background: linear-gradient(#3c5c98, #3c5c98) center / 5px 1px no-repeat, #fafafa;
}

.main {
    flex: 1;
    min-width: 0;
    display: flex;
    flex-direction: column;
}

.tabs {
    display: flex;
    gap: 3px;
    height: 30px;
    flex: none;
    align-items: flex-end;
    padding-left: 8px;
}

.tab {
    display: flex;
    align-items: flex-start;
    height: 22px;
    min-width: 66px;
    padding: 1px 3px 0 4px;
    border: 2px solid #fff;
    border-bottom: 0;
    background: #dddce8;
    color: #808088;
}

.tab svg {
    width: 16px;
    height: 16px;
}

.tab span {
    flex: 1;
    margin: -1px 0 0 1px;
    white-space: nowrap;
}

.tab.active {
    z-index: 1;
    height: 24px;
    margin-bottom: -2px;
    border-color: #9a99ff;
    color: #000;
    font-weight: bold;
}

/* 画面编辑器 */
.editor {
    position: relative;
    flex: 1;
    min-height: 0;
    overflow: hidden;
    border: 2px solid #9a99ff;
    border-right: 0;
}

.bezel {
    width: 1242px;
    height: 100%;
    padding: 10px 8px 0 10px;
    background: #3a3a3c;
    border-radius: 3px 3px 0 0;
}

.bezel-line {
    height: 100%;
    padding: 0 45px 0 43px;
    border: 1px solid #68686c;
    border-bottom: 0;
    border-radius: 3px 3px 0 0;
}

.face {
    height: 100%;
    padding-left: 55px;
    background: #dfdfdf;
}

.brand {
    display: flex;
    justify-content: space-between;
    align-items: flex-start;
    height: 196px;
    padding: 27px 54px 0 0;
}

.siemens {
    width: 139px;
    height: 38px;
    background: #488688;
    color: #fff;
    font: 800 28px/38px "Noto Sans", "Open Sans", sans-serif;
    text-align: center;
}

.smart {
    color: #3a3a3c;
    font: 300 33px/40px Roboto, sans-serif;
}

.front {
    display: flex;
    align-items: flex-start;
}

.screen {
    position: relative;
    flex: 1;
    height: 600px;
    padding-left: 40px;
    background: #c5c3c8;
}

/* 网格点覆盖在对象之上 */
.screen::before {
    content: "";
    position: absolute;
    inset: 0;
    z-index: 1;
    background: conic-gradient(at 1px 1px, transparent 75%, #000 0) 0 0 / 8px 8px;
}

.screen-top {
    display: flex;
    justify-content: space-between;
    align-items: flex-start;
    height: 80px;
    margin-left: -40px;
}

.logo {
    width: 56px;
    height: 40px;
    background: #e2e0e4;
}

.clock {
    width: 156px;
    height: 21px;
    margin-top: 7px;
    padding-left: 2px;
    background: #e2e0e4;
    color: #666;
    font: 13px/21px "Liberation Mono", monospace;
}

.alarm {
    position: relative;
    z-index: 2;
    display: grid;
    grid-template-columns: 1fr 34px;
    grid-template-rows: 190px 50px;
    width: 952px;
    height: 400px;
    background: #d7d4cf;
}

.alarm table {
    border-collapse: collapse;
    table-layout: fixed;
    width: 918px;
}

.alarm tr {
    height: 19px;
}

.alarm .focus {
    outline: 1px dotted #000;
    outline-offset: -1px;
}

.alarm td {
    width: 72px;
    height: 19px;
    padding: 0 0 0 1px;
    font: 13px/19px "Liberation Mono", monospace;
    white-space: nowrap;
}

.alarm td:nth-child(3),
.alarm td:nth-child(5) {
    width: 16px;
}

.alarm td:nth-child(4) {
    width: 40px;
}

.alarm td:last-child {
    width: auto;
    font: 16px/19px "Noto Sans CJK SC", sans-serif;
}

.alarm td i {
    display: inline-block;
    width: 32px;
    vertical-align: top;
    font: 13px/19px "Liberation Mono", monospace;
}

.scroll {
    display: flex;
    flex-direction: column;
}

.scroll .push {
    margin-top: auto;
}

.key {
    display: flex;
    align-items: center;
    justify-content: center;
    width: 34px;
    height: 34px;
    background: #ccc;
    border: 2px solid;
    border-color: #fff #707070 #707070 #fff;
}

.key svg {
    width: 16px;
    height: 28px;
}

.alarm-keys {
    display: flex;
    grid-column: 1;
}

.key.big {
    width: 50px;
    height: 50px;
}

.key.big svg {
    width: 40px;
    height: 44px;
}

.alarm-keys .push {
    margin-left: auto;
}

.handle {
    position: absolute;
    width: 5px;
    height: 5px;
    background: #a0a0a0;
}

.handle.blue {
    width: 6px;
    height: 6px;
    border: 1px solid #204858;
    background: #80ccff;
}

.h1,
.h4 {
    left: 0;
}

.h2 {
    left: 50%;
}

.h3,
.h5 {
    right: 0;
}

.h1,
.h2,
.h3 {
    top: 0;
}

.h4,
.h5 {
    top: 117px;
}

.touch {
    width: 55px;
    height: 188px;
    margin-top: 1px;
    padding-top: 4px;
    background: #3a3a3c;
    color: #dfdfdf;
    font: 64px/55px "Liberation Sans Narrow", "Roboto Condensed", sans-serif;
    writing-mode: vertical-rl;
}

.watermark {
    position: absolute;
    left: 356px;
    top: 308px;
    color: rgba(255, 255, 255, .35);
    font: 27px/30px "Liberation Sans", sans-serif;
    white-space: nowrap;
    transform: rotate(-30deg);
    pointer-events: none;
    z-index: 3;
}

.watermark .cn {
    font: bold 40px/44px "Noto Sans CJK SC", sans-serif;
}

/* 属性视图 */
.props {
    flex: 0 0 304px;
    display: flex;
    flex-direction: column;
    border-top: 5px solid #5c5b80;
    background: #eaeaea;
}

.props .panel-title {
    height: 27px;
    border-top: 1px solid #fff;
    border-bottom: 1px solid #a4a4a4;
}

.props-body {
    flex: 1;
    min-height: 0;
    display: flex;
    gap: 4px;
    padding: 2px 0 0 4px;
}

.props-nav {
    width: 150px;
    padding: 0 5px;
    border: 1px solid #a4a4a4;
    border-bottom: 0;
    background: #fff;
}

.props-nav li {
    display: flex;
    align-items: center;
    height: 16px;
}

.props-nav .sub {
    padding-left: 19px;
}

.sq {
    width: 6px;
    height: 6px;
    margin: 0 9px 0 3px;
    background: #0000a0;
}

.tri {
    width: 8px;
    margin-right: 10px;
    border: 7px solid transparent;
    border-right: 0;
    border-left: 8px solid #0000a0;
}

.props-nav svg {
    width: 12px;
    height: 12px;
    margin-right: 4px;
}

.props-nav .current span {
    padding: 0 2px;
    background: #f0f0f0;
}

.props-page {
    flex: 1;
    padding: 24px 0 0 9px;
    border: solid #a4a4a4;
    border-width: 1px 0 0 1px;
}

.rule {
    height: 2px;
    background: #606060;
    border-bottom: 1px solid #fff;
}

.groups {
    display: flex;
    align-items: flex-start;
    gap: 20px;
    padding: 9px 0 0 1px;
}

.group-col {
    display: flex;
    flex-direction: column;
    gap: 7px;
    width: 256px;
}

.group {
    border: 1px solid #a8a8a8;
    border-top: 0;
}

.group h3 {
    height: 15px;
    padding-left: 12px;
    margin: 0 -1px;
    background: linear-gradient(#e6e6e6, #c4c4c4);
    color: #777;
    font: bold 12px/14px "Noto Sans CJK SC", sans-serif;
}

.columns {
    width: 200px;
    height: 170px;
}

.list {
    margin: 5px 4px 0 9px;
    background: #fff;
}

.list label,
.options label {
    display: flex;
    align-items: center;
    height: 15px;
    padding-left: 1px;
}

.list span {
    flex: 1;
    margin-left: 1px;
    padding-left: 3px;
    line-height: 15px;
}

.sel span {
    background: #39f;
    color: #fff;
}

.options {
    padding: 2px 8px 10px;
}

.options label {
    height: 20px;
}

.options span {
    margin-left: 3px;
}

.radios {
    padding: 0 6px 8px;
}

input[type=checkbox],
input[type=radio] {
    appearance: none;
    width: 13px;
    height: 13px;
    margin: 0;
    flex: none;
    border: 1px solid #8c8c8c;
    box-shadow: inset 0 0 0 1px #f4f4f4;
    background: linear-gradient(135deg, #c8ccd0, #fff);
}

input[type=checkbox]:checked {
    background: url("data:image/svg+xml,%3Csvg xmlns='http://www.w3.org/2000/svg' viewBox='0 0 11 11'%3E%3Cpath d='M2.500 5l2 3.500L9 2' fill='none' stroke='%23404f98' stroke-width='2'/%3E%3C/svg%3E"), linear-gradient(135deg, #c8ccd0, #fff);
}

input[type=checkbox]:disabled {
    border-color: #b4b4b4;
    background: url("data:image/svg+xml,%3Csvg xmlns='http://www.w3.org/2000/svg' viewBox='0 0 11 11'%3E%3Cpath d='M2.500 5l2 3.500L9 2' fill='none' stroke='%23a0a0a0' stroke-width='2'/%3E%3C/svg%3E"), #f4f4f4;
}

input:disabled + span {
    color: #707070;
}

input[type=radio] {
    border-radius: 50%;
}

input[type=radio]:checked {
    background: radial-gradient(circle, #123c60 0 3px, #d4dce4 4px);
}

/* 浮动工具箱 */
.toolbox {
    position: absolute;
    top: 127px;
    right: 0;
    bottom: 51px;
    z-index: 5;
    width: 38px;
    display: flex;
    flex-direction: column;
    overflow: hidden;
    white-space: nowrap;
    border: 1px solid #000;
    border-right: 0;
    box-shadow: inset 2px 2px 0 #fff;
    padding: 2px 0 2px 2px;
    background: #f7f7f7;
}

.toolbox h2 {
    height: 29px;
    padding-left: 4px;
    flex: none;
    background: #b8b7c3;
    color: #fff;
    font-size: 17px;
    font-weight: normal;
    line-height: 29px;
}

.toolbox-bar {
    display: flex;
    align-items: center;
    gap: 7px;
    height: 23px;
    flex: none;
}

.toolbox-bar .grip {
    margin: 0 0 0 2px;
}

.toolbox-bar svg {
    width: 12px;
    height: 16px;
}

.cat {
    height: 18px;
    flex: none;
    padding-left: 7px;
    text-align: left;
    font-size: 11px;
    line-height: 14px;
    background: #eaeaea;
    border-top: 1px solid #ffc;
}

.cat.blue {
    color: #0040ff;
}

.seam {
    height: 9px;
    flex: none;
    margin-top: 4px;
    background: linear-gradient(#000 1px, #fff 1px 2px, #666 2px 3px, #fff 3px 4px, #999 4px 5px, #fff 5px 6px, #ccc 6px 7px, #f7f7f7 7px);
}

.seam.flip {
    margin: auto 0 1px;
    transform: rotate(180deg);
}

.toolbox li {
    display: flex;
    align-items: center;
    gap: 6px;
    height: 20px;
    padding-left: 2px;
    font-size: 11px;
}

.toolbox ul {
    padding-top: 2px;
}

.toolbox li svg {
    width: 16px;
    height: 16px;
}

.lib {
    height: 80px;
    flex: none;
    margin-top: 1px;
    padding: 29px 0 0 5px;
    border: solid #666;
    border-width: 2px 0 1px 1px;
    background: #fff;
}

.lib svg {
    width: 22px;
    height: 36px;
}

/* 标注 */
.mark-box {
    position: absolute;
    left: 300px;
    top: 26px;
    z-index: 6;
    width: 109px;
    height: 33px;
    border: 3px solid #ff2412;
    border-radius: 3px;
    pointer-events: none;
}

.mark-arrow {
    position: absolute;
    left: 280px;
    top: 61px;
    z-index: 6;
    width: 52px;
    height: 340px;
    overflow: visible;
    pointer-events: none;
}
```
